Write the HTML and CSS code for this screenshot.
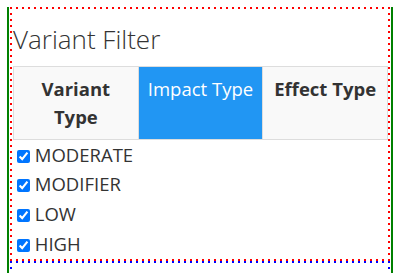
FILE: index.html
```html
<!DOCTYPE html>
<html>
<head>
  <title>Variant Filter</title>
  <meta charset="UTF-8">
  <link rel="stylesheet" href="styles.css">
</head>
<body>
  <div class="page">
    <div class="filter dots-red">
      <h3 class="filter-title">Variant Filter</h3>
      <table class="filter-table">
        <thead>
          <tr>
            <th>Variant Type</th>
            <th class="active">Impact Type</th>
            <th>Effect Type</th>
          </tr>
        </thead>
      </table>
      <div class="options">
        <label class="option"><input type="checkbox" checked> MODERATE</label>
        <label class="option"><input type="checkbox" checked> MODIFIER</label>
        <label class="option"><input type="checkbox" checked> LOW</label>
        <label class="option"><input type="checkbox" checked> HIGH</label>
      </div>
    </div>
    <div class="next-panel dots-blue"></div>
  </div>
</body>
</html>
```

FILE: styles.css
```css
body {
  margin: 0;
  font-family: "Open Sans", sans-serif;
  font-size: 18px;
  color: #333;
}

.page {
  margin: 0 7px;
  padding: 0 1px;
  border-left: 2px solid green;
  border-right: 2px solid green;
}

/* square 2px dots, 6px apart */
.dots-red {
  --dot: red;
}

.dots-blue {
  --dot: blue;
}

.dots-red, .dots-blue {
  background:
    repeating-linear-gradient(90deg, var(--dot) 0 2px, transparent 2px 6px) left top / 100% 2px no-repeat,
    repeating-linear-gradient(90deg, var(--dot) 0 2px, transparent 2px 6px) left bottom / 100% 2px no-repeat,
    repeating-linear-gradient(180deg, var(--dot) 0 2px, transparent 2px 6px) left top / 2px 100% no-repeat,
    repeating-linear-gradient(180deg, var(--dot) 0 2px, transparent 2px 6px) right top / 2px 100% no-repeat;
}

.filter {
  margin-top: 7px;
  padding: 2px 2px 3px 3px;
}

.filter-title {
  margin: 16px 0 12px;
  font-size: 26px;
  font-weight: 300;
  line-height: 1.1;
}

.filter-table {
  width: 100%;
  table-layout: fixed;
  border-collapse: collapse;
}

.filter-table th {
  padding: 8px;
  border: 1px solid #ddd;
  background-color: #f9f9f9;
  font-size: 18.5px;
  line-height: 28px;
  vertical-align: top;
  text-align: center;
}

.filter-table th.active {
  background-color: #2196f3;
  color: white;
  font-weight: 400;
}

.option {
  display: block;
  font-size: 18.5px;
  line-height: 29.7px;
}

.option input {
  margin: 0 0 0 4px;
  vertical-align: -1px;
}

.next-panel {
  height: 40px;
}
```
